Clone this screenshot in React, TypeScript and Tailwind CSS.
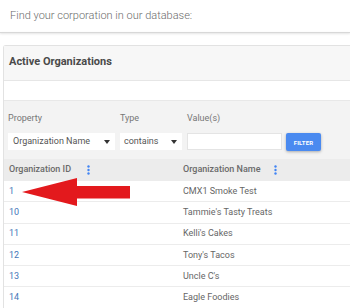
import React from 'react';

const rows = [
  { id: '1', name: 'CMX1 Smoke Test' },
  { id: '10', name: "Tammie's Tasty Treats" },
  { id: '11', name: "Kelli's Cakes" },
  { id: '12', name: "Tony's Tacos" },
  { id: '13', name: "Uncle C's" },
  { id: '14', name: 'Eagle Foodies' },
];

const Kebab = () => (
  <svg width="3" height="10" viewBox="0 0 3 10" className="shrink-0">
    <circle cx="1.5" cy="1.5" r="1.2" fill="#4285f4" />
    <circle cx="1.5" cy="5" r="1.2" fill="#4285f4" />
    <circle cx="1.5" cy="8.5" r="1.2" fill="#4285f4" />
  </svg>
);

const Caret = () => (
  <svg width="6" height="4" viewBox="0 0 6 4">
    <path d="M0 0 L6 0 L3 4 Z" fill="#333" />
  </svg>
);

const App: React.FC = () => {
  return (
    <div className="w-[350px] h-[308px] overflow-hidden bg-white font-['Roboto',sans-serif] relative">
      <div className="h-[32px] flex items-center pl-[10px] text-[11px] text-[#6b6b6b] font-light">
        Find your corporation in our database:
      </div>
      <div className="h-px bg-[#d8d8d8] shadow-[0_1px_2px_rgba(0,0,0,0.15)]" />

      <div className="mt-[12px] ml-[3px] border-l border-t border-[#e2e2e2] rounded-tl-[3px]">
        {/* card header */}
        <div className="h-[35px] flex items-center pl-[5px] pb-[1px] bg-[#f7f7f7] border-b border-[#e6e6e6] text-[11px] font-bold text-[#4a4a4a]">
          Active Organizations
        </div>
        <div className="h-[20px] bg-white border-b border-[#e8e8e8]" />

        {/* filter panel */}
        <div className="h-[58px] bg-[#f3f3f3] flex items-end gap-[5px] pl-[4px] pb-[9px]">
          <div className="flex flex-col">
            <span className="text-[9px] text-[#777] mb-[10px] leading-none">Property</span>
            <div className="w-[107px] h-[17px] bg-white flex items-center justify-between pl-[5px] pr-[5px] text-[9px] text-[#555]">
              <span>Organization Name</span>
              <Caret />
            </div>
          </div>
          <div className="flex flex-col">
            <span className="text-[9px] text-[#777] mb-[10px] leading-none">Type</span>
            <div className="w-[62px] h-[17px] bg-white flex items-center justify-between pl-[4px] pr-[5px] text-[9px] text-[#555]">
              <span>contains</span>
              <Caret />
            </div>
          </div>
          <div className="flex flex-col">
            <span className="text-[9px] text-[#777] mb-[10px] leading-none">Value(s)</span>
            <div className="w-[95px] h-[17px] bg-white border border-[#e4e4e4]" />
          </div>
          <button className="ml-[-1px] mb-[-1px] w-[35px] h-[18px] bg-[#4a8af0] rounded-[2px] shadow-[0_1px_3px_rgba(0,0,0,0.3)] text-white text-[6px] font-bold tracking-wide">
            FILTER
          </button>
        </div>

        {/* table header */}
        <div className="h-[22px] flex items-center bg-[#ececec] text-[9px] font-medium text-[#6a6a6a]">
          <div className="w-[178px] flex items-center pl-[5px]">
            <span className="w-[78px]">Organization ID</span>
            <Kebab />
          </div>
          <div className="flex items-center pl-[1px]">
            <span className="w-[91px]">Organization Name</span>
            <Kebab />
          </div>
        </div>

        {rows.map(r => (
          <div key={r.id} className="h-[21.3px] flex items-center pt-[1px] border-b border-[#ececec] text-[9px]">
            <span className="w-[178px] pl-[5px] text-[#4577b8]">{r.id}</span>
            <span className="pl-[1px] text-[#666]">{r.name}</span>
          </div>
        ))}
      </div>

      {/* red arrow callout */}
      <svg className="absolute left-[21px] top-[177px]" width="112" height="31" viewBox="0 0 112 31">
        <path d="M1 15 L56 1 L56 9 L109 9 L109 21.5 L56 21.5 L56 29 Z" fill="#e3191d" />
      </svg>
    </div>
  );
};

export default App;
